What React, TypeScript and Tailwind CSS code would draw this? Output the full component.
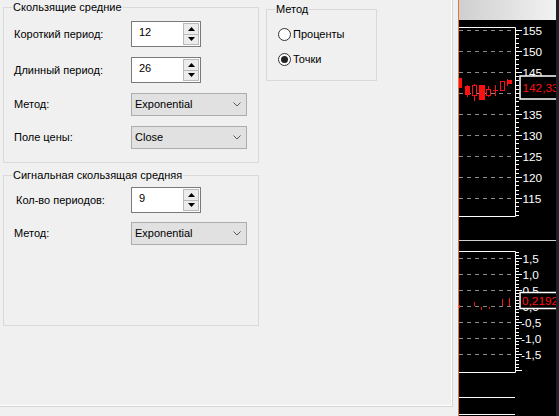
import React from "react";

const font = "font-['Liberation_Sans',Arial,sans-serif]";

function Arrow({ down }: { down?: boolean }) {
  return (
    <svg width="7" height="4" viewBox="0 0 7 4" className="block">
      {down ? <path d="M0 0h7L3.5 4z" fill="#000" /> : <path d="M0 4h7L3.5 0z" fill="#000" />}
    </svg>
  );
}

function Spin({ value }: { value: string }) {
  return (
    <div className="flex h-[26px] w-[70px] border border-[#7a7a7a] bg-white">
      <div className="flex-1 pl-[7px] pt-[3px] leading-[14px]">{value}</div>
      <div className="flex w-[17px] flex-col py-px pr-px">
        <div className="flex flex-1 items-center justify-center border border-[#b9b9b9] bg-[#ececec]">
          <Arrow />
        </div>
        <div className="flex flex-1 items-center justify-center border border-t-0 border-[#b9b9b9] bg-[#ececec]">
          <Arrow down />
        </div>
      </div>
    </div>
  );
}

function Combo({ value }: { value: string }) {
  return (
    <div className="flex h-[23px] w-[116px] items-center justify-between border border-[#adadad] bg-[#e1e1e1] pl-[3px] pr-[5px]">
      <span>{value}</span>
      <svg width="8" height="5" viewBox="0 0 8 5" className="block">
        <path d="M0.5 0.5L4 4L7.5 0.5" fill="none" stroke="#5a5a5a" strokeWidth="1" />
      </svg>
    </div>
  );
}

function Row({ label, children, indent }: { label: string; children: React.ReactNode; indent?: boolean }) {
  return (
    <div className="flex items-center">
      <span className={indent ? "w-[117px] pl-[2px]" : "w-[117px]"}>{label}</span>
      {children}
    </div>
  );
}

function Radio({ label, checked }: { label: string; checked?: boolean }) {
  return (
    <div className="flex h-[14px] items-center gap-[2px]">
      <span className="flex h-[13px] w-[13px] items-center justify-center rounded-full border border-[#333] bg-white">
        {checked && <span className="h-[7px] w-[7px] rounded-full bg-[#222]" />}
      </span>
      <span>{label}</span>
    </div>
  );
}

function Chart() {
  const upper = [155, 150, 145, 140, 135, 130, 125, 120, 115];
  const lower = ["1,5", "1,0", "0,5", "0,0", "-0,5", "-1,0", "-1,5"];
  const upTicks: number[] = [];
  for (let i = 0; 30 + i * 4.2 < 215; i++) upTicks.push(i);
  const lowTicks: number[] = [];
  for (let i = -2; 258 + i * 3.2 < 371; i++) lowTicks.push(i);
  const red = "#ff1010";

  return (
    <svg width="100" height="416" viewBox="0 0 100 416" className="block" fontFamily="'Liberation Sans', Arial, sans-serif">
      <defs>
        <linearGradient id="hdr" x1="0" x2="1" y1="0" y2="0">
          <stop offset="0" stopColor="#cfcfcf" />
          <stop offset="1" stopColor="#f2f2f2" />
        </linearGradient>
      </defs>
      <rect x="0" y="0" width="100" height="416" fill="#000" />
      <rect x="0" y="0" width="97" height="20" fill="url(#hdr)" />

      {/* верхняя панель */}
      {upper.map((v, k) => (
        <line key={v} x1="0" x2="56" y1={30.5 + k * 21} y2={30.5 + k * 21} stroke="#8a8a8a" strokeDasharray="4 4" />
      ))}
      <path d="M0 27.5H56.5V216.5H0" fill="none" stroke="#fff" />
      {upTicks.map((i) => {
        const y = Math.round(30 + i * 4.2) + 0.5;
        return <line key={i} x1="56" x2={i % 5 === 0 ? 63 : 60} y1={y} y2={y} stroke="#fff" />;
      })}
      {upper.map((v, k) => (
        <text key={v} x="63.5" y={31 + k * 21} dominantBaseline="central" fontSize="11.8" fill="#fff">
          {v}
        </text>
      ))}

      {/* свечи */}
      <g fill={red} stroke={red}>
        <rect x="0" y="78" width="3" height="10" stroke="none" />
        <line x1="8.5" x2="8.5" y1="85" y2="97" />
        <rect x="6" y="86" width="5" height="9" stroke="none" />
        <line x1="15.5" x2="15.5" y1="84" y2="101" />
        <rect x="13.5" y="85.5" width="4" height="10" fill="#000" />
        <rect x="20" y="85" width="6" height="15" stroke="none" />
        <line x1="29.5" x2="29.5" y1="86" y2="97" />
        <rect x="27.5" y="89.5" width="4" height="6" fill="#000" />
        <line x1="36.5" x2="36.5" y1="85" y2="96" />
        <line x1="34" x2="39" y1="90.5" y2="90.5" />
        <rect x="41.5" y="81.5" width="4" height="9" fill="#000" />
        <line x1="48.5" x2="48.5" y1="79" y2="86" />
        <rect x="48" y="80" width="5" height="4" stroke="none" />
      </g>
      <rect x="61" y="76" width="45" height="23" fill="#000" stroke="#fff" strokeWidth="1.5" />
      <text x="63.5" y="88" dominantBaseline="central" fontSize="11.8" fill={red}>
        142,33
      </text>

      <line x1="0" x2="98" y1="240.5" y2="240.5" stroke="#cfcfcf" />

      {/* нижняя панель */}
      {lower.map((v, k) => (
        <line key={v} x1="0" x2="56" y1={258.5 + k * 16} y2={258.5 + k * 16} stroke="#8a8a8a" strokeDasharray="4 4" />
      ))}
      <path d="M0 251.5H56.5V372.5H0" fill="none" stroke="#fff" />
      {lowTicks.map((i) => {
        const y = Math.round(258 + i * 3.2) + 0.5;
        return <line key={i} x1="56" x2={i % 5 === 0 ? 63 : 60} y1={y} y2={y} stroke="#fff" />;
      })}
      {lower.map((v, k) => (
        <text key={v} x={v.startsWith("-") ? 62 : 63.5} y={259 + k * 16} dominantBaseline="central" fontSize="11.8" fill="#fff">
          {v}
        </text>
      ))}
      <g stroke={red}>
        <line x1="0.5" x2="0.5" y1="305" y2="308" />
        <line x1="15.5" x2="15.5" y1="302" y2="306" />
        <line x1="22.5" x2="22.5" y1="307" y2="310" />
        <line x1="30.5" x2="30.5" y1="307" y2="309" />
        <line x1="43.5" x2="43.5" y1="299" y2="306" />
        <line x1="50.5" x2="50.5" y1="298" y2="306" />
      </g>
      <rect x="61" y="292.5" width="45" height="16" fill="#000" stroke="#fff" strokeWidth="1.5" />
      <text x="63" y="301" dominantBaseline="central" fontSize="11.8" fill={red}>
        0,21925
      </text>

      <line x1="0" x2="56" y1="397.5" y2="397.5" stroke="#fff" />
      <line x1="0" x2="56" y1="414.5" y2="414.5" stroke="#fff" />

      <rect x="97" y="0" width="3" height="416" fill="#1d2129" />
    </svg>
  );
}

export default function App() {
  return (
    <div className={`flex h-[416px] w-[559px] overflow-hidden bg-[#f0f0f0] text-[11px] text-black ${font}`}>
      <div className="h-[407px] w-[453px] border-r border-b border-[#d5d5d5]">
        <div className="flex h-full gap-[7px] border-r border-b border-white pl-[3px]">
          <div className="flex w-[256px] flex-col gap-[5px]">
            <fieldset className="h-[163px] border border-[#d9d9d9]">
              <legend className="ml-[8px] px-px leading-[14px]">Скользящие средние</legend>
              <div className="flex flex-col gap-[10px] pl-[10px] pt-[7px]">
                <Row label="Короткий период:">
                  <Spin value="12" />
                </Row>
                <Row label="Длинный период:">
                  <Spin value="26" />
                </Row>
                <Row label="Метод:">
                  <Combo value="Exponential" />
                </Row>
                <Row label="Поле цены:">
                  <Combo value="Close" />
                </Row>
              </div>
            </fieldset>
            <fieldset className="h-[158px] border border-[#d9d9d9]">
              <legend className="ml-[8px] px-px leading-[14px]">Сигнальная скользящая средняя</legend>
              <div className="flex flex-col gap-[9px] pl-[10px] pt-[5px]">
                <Row label="Кол-во периодов:" indent>
                  <Spin value="9" />
                </Row>
                <Row label="Метод:">
                  <Combo value="Exponential" />
                </Row>
              </div>
            </fieldset>
          </div>
          <fieldset className="mt-[2px] h-[79px] w-[111px] border border-[#d9d9d9]">
            <legend className="ml-[8px] px-px leading-[14px]">Метод</legend>
            <div className="flex flex-col gap-[11px] pl-[11px] pt-[11px]">
              <Radio label="Проценты" />
              <Radio label="Точки" checked />
            </div>
          </fieldset>
        </div>
      </div>
      <div className="w-[5px]" />
      <div className="w-px bg-[#e0793a]" />
      <Chart />
    </div>
  );
}
